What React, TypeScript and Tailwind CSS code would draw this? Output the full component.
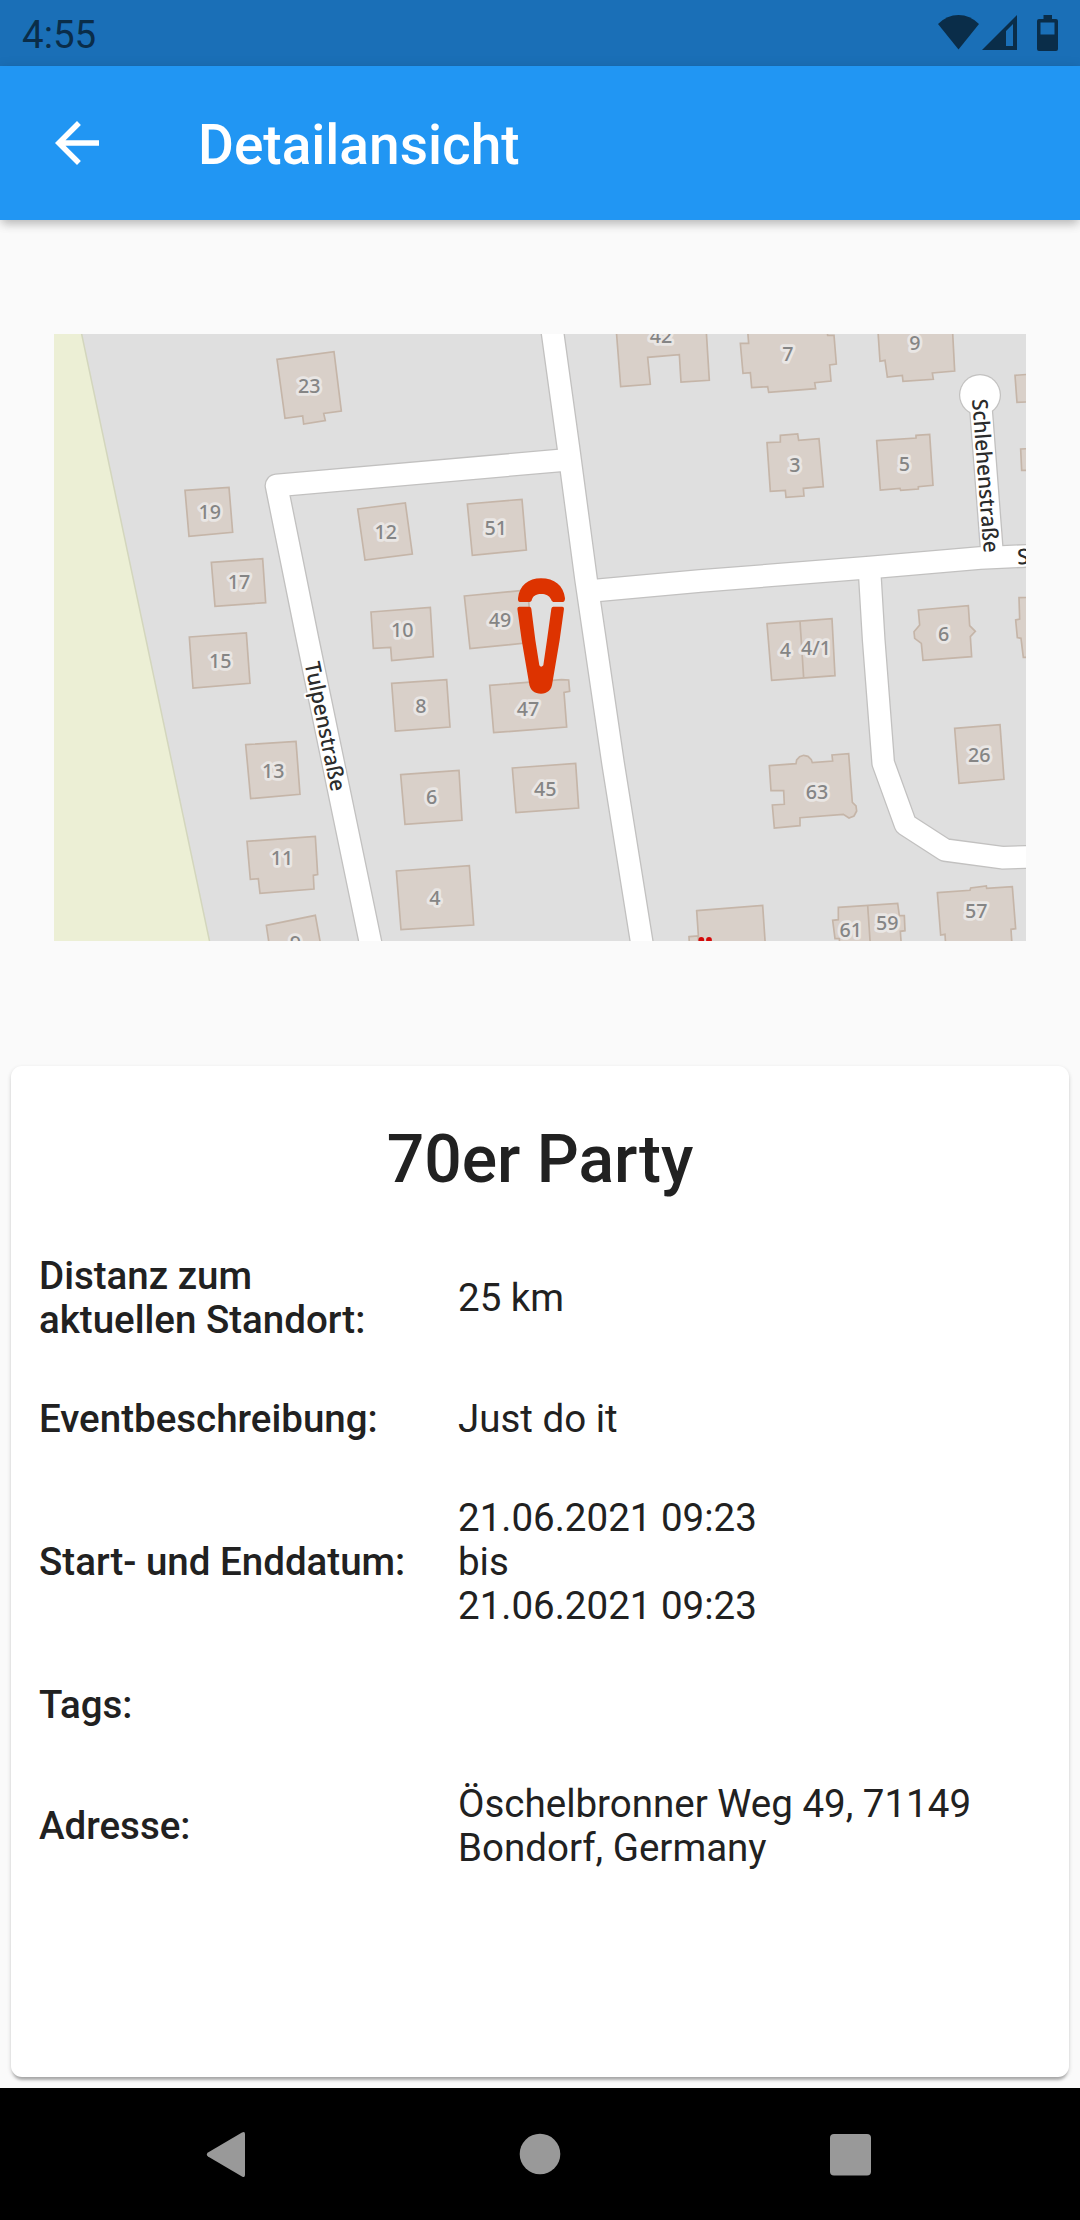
import React from "react";

type Label = [string, number, number];
type Tile = { origin: [number, number]; buildings: string[]; lines?: string[]; labels: Label[] };

// Map sheets: geometry is stored at three units per pixel, relative to the sheet origin.
const tiles: Tile[] = [
  {
    origin: [40, 320],
    buildings: [
      "711,118 882,95 904,273 851,280 856,302 791,312 788,288 735,295",
      "435,511 567,502 578,637 447,649",
      "514,727 668,716 677,848 525,859",
    ],
    labels: [["23", 808, 200], ["19", 509, 577], ["17", 597, 788]],
  },
  {
    origin: [360, 320],
    buildings: [
      "768,20 782,200 871,193 863,112 958,104 963,186 1048,181 1038,20",
      "-7,567 136,549 157,702 15,720",
      "322,552 486,538 499,690 337,706",
      "313,828 503,810 517,967 330,986",
      "33,876 211,862 220,1010 95,1022 92,982 40,985",
    ],
    labels: [["42", 903, 50], ["12", 77, 636], ["51", 407, 625], ["49", 420, 900], ["10", 127, 930]],
  },
  {
    origin: [700, 320],
    buildings: [
      "142,20 146,70 121,70 129,160 151,158 155,203 203,200 206,217 347,206 344,188 393,183 389,135 409,132 402,46 383,46 380,20",
      "533,20 540,124 555,121 562,171 607,166 609,184 700,178 697,159 764,153 757,20",
      "201,368 241,366 241,346 293,342 296,361 357,356 370,500 310,505 312,528 258,532 256,511 211,514",
      "530,362 648,354 648,346 689,343 699,496 655,500 655,507 602,511 600,505 541,510",
      "945,166 1000,162 1000,245 951,247",
      "962,387 1000,385 1000,451 965,451",
      "201,911 396,896 405,1067 215,1081",
      "655,870 805,857 809,917 826,934 811,950 815,1010 669,1021 664,970 644,955 642,935 659,915",
      "957,833 1000,832 1000,1012 970,1012 963,955 952,953 947,900 959,897",
    ],
    lines: ["300,904 311,1073"],
    labels: [["7", 264, 102], ["9", 645, 70], ["3", 285, 437], ["5", 613, 433], ["6", 731, 943]],
  },
  {
    origin: [40, 630],
    buildings: [
      "448,21 619,9 630,160 459,174",
      "617,344 768,334 780,493 632,506",
      "621,634 826,619 833,734 820,736 822,777 660,790 655,746 631,748",
      "679,886 826,856 845,960 690,960",
    ],
    labels: [["15", 541, 95], ["13", 700, 423], ["11", 726, 686], ["9", 766, 940]],
  },
  {
    origin: [360, 630],
    buildings: [
      "95,160 260,149 270,291 106,303",
      "389,166 605,149 626,150 629,184 612,187 620,291 401,308",
      "457,414 647,400 656,534 468,548",
      "122,434 297,421 306,571 135,583",
      "109,723 328,707 341,885 123,899",
    ],
    labels: [["8", 183, 229], ["47", 504, 238], ["6", 215, 503], ["45", 556, 477], ["4", 225, 804]],
  },
  {
    origin: [700, 630],
    buildings: [
      "764,295 900,284 912,448 777,460",
      "208,407 288,401 290,390 299,380 311,376 324,379 334,389 337,398 398,393 396,375 446,371 457,517 468,528 470,543 462,558 447,564 430,553 300,563 300,587 223,594 217,525 253,523 251,482 213,482",
      "415,832 593,820 598,857 613,857 615,902 601,904 605,960 420,960 418,926 405,926 398,871 415,869",
      "712,788 810,781 812,774 859,768 860,775 937,770 947,896 933,898 937,960 738,960 735,913 722,915",
      "-33,920 -5,918 -2,960 -31,960",
      "-10,842 188,826 197,960 -2,960",
    ],
    lines: ["503,826 512,960"],
    labels: [["4", 256, 62], ["4/1", 348, 56], ["63", 351, 486], ["26", 838, 375], ["61", 452, 900], ["59", 562, 881], ["57", 829, 844]],
  },
];

const roads = [
  "M551.9 328L568.5 448L586 579L593.5 630L613 763L641.5 941L643 950",
  "M571 459.5L276.5 485.5L307.7 640L372 950",
  "M590 591L700 581L870 567.5L980 558L1035 555.5",
  "M869.5 570L873.7 640L883.2 763L905.5 824.5L945 850L1002 857.7L1035 856.7",
  "M980 395L981.3 413L991.8 550",
];

const streetNames: { text: string; x: number; y: number; angle: number; length?: number }[] = [
  { text: "Tulpenstraße", x: 304.5, y: 663.5, angle: 78.3, length: 131.5 },
  { text: "Schlehenstraße", x: 972, y: 399.5, angle: 85.6, length: 154 },
  { text: "S", x: 1017.5, y: 564.5, angle: -3 },
];

function StreetMap() {
  return (
    <svg viewBox="54 334 972 607" className="block h-[607px] w-[972px] overflow-hidden bg-[#dfdfdf]">
      <path d="M50 330H80.8L209.5 941V950H50Z" fill="#ecefd5" stroke="#d3d6bd" strokeWidth="1.5" />
      <g fill="none" strokeLinejoin="round">
        <g stroke="#c2c1c0" strokeWidth="24">
          {roads.map((d) => <path key={d} d={d} />)}
        </g>
        <circle cx="980" cy="395" r="21" fill="#c2c1c0" />
        <g stroke="#ffffff" strokeWidth="21.4">
          {roads.map((d) => <path key={d} d={d} />)}
        </g>
        <circle cx="980" cy="395" r="19.8" fill="#ffffff" />
      </g>
      {tiles.map((t) => (
        <g key={t.origin.join()} transform={`translate(${t.origin[0]} ${t.origin[1]}) scale(0.33333)`}>
          <g fill="#d9d0c9" stroke="#c5b5a8" strokeWidth="5">
            {t.buildings.map((p) => <polygon key={p} points={p} />)}
            {t.lines?.map((p) => <polyline key={p} points={p} />)}
          </g>
        </g>
      ))}
      {tiles.map((t) => (
        <g
          key={t.origin.join()}
          transform={`translate(${t.origin[0]} ${t.origin[1]}) scale(0.33333)`}
          className="font-['Noto_Sans'] font-medium"
          fontSize="59"
          textAnchor="middle"
          fill="#858585"
          stroke="#e9e6e4"
          strokeWidth="17"
          strokeLinejoin="round"
          paintOrder="stroke"
        >
          {t.labels.map(([n, x, y]) => <text key={n} x={x} y={y + 20}>{n}</text>)}
        </g>
      ))}
      <g className="font-['Noto_Sans'] font-medium" fontSize="21.5" fill="#2b2b2b" stroke="#ffffff" strokeWidth="4" strokeLinejoin="round" paintOrder="stroke">
        {streetNames.map((s) => (
          <text key={s.text} transform={`translate(${s.x} ${s.y}) rotate(${s.angle})`} textLength={s.length} lengthAdjust="spacingAndGlyphs">{s.text}</text>
        ))}
      </g>
      <g fill="#d40a0a">
        <circle cx="701.3" cy="940" r="2.9" />
        <circle cx="709" cy="940" r="2.9" />
      </g>
      <g transform="translate(360 320) scale(0.33333)" fill="#dd3300">
        <path d="M480 846Q473 846 474 835C478 797 505 775 543 775C583 775 611 797 615 835Q615 846 608 846H580Q575 846 573 838C567 826 558 822 544 822C530 822 520 826 516 838Q515 846 510 846Z" />
        <path d="M478 860H508Q513 860 514 866L526 960L538 1036Q543 1044 550 1036L561 960L574 866Q575 860 580 860H607Q612 860 612 866L599 960L577 1090C575 1110 562 1121 543 1121C524 1121 509 1110 507 1088L485 960L472 866Q472 860 478 860Z" />
      </g>
    </svg>
  );
}

function StatusBar() {
  return (
    <div className="flex h-[66px] shrink-0 items-center justify-between bg-[#1a6fb7] pr-[21px] pl-[22px] text-[#0a2d49]">
      <span className="pt-[5px] text-[38.5px] leading-none">4:55</span>
      <svg viewBox="938 0 121 66" className="h-[66px] w-[121px]" fill="currentColor">
        <path d="M938 24Q947 15 958.5 15T979 24L958.5 49.5Z" />
        <path fillRule="evenodd" d="M982 50L1017 15V50ZM1006 31V46H1013V24Z" />
        <path fillRule="evenodd" d="M1043.500 15H1052V19H1056Q1058 19 1058 21V49Q1058 51 1056 51H1039Q1037 51 1037 49V21Q1037 19 1039 19H1043.500ZM1040.500 22.500V34.500H1054.500V22.500Z" />
      </svg>
    </div>
  );
}

const rows: { label: string[]; value: string[] }[] = [
  { label: ["Distanz zum", "aktuellen Standort:"], value: ["25 km"] },
  { label: ["Eventbeschreibung:"], value: ["Just do it"] },
  { label: ["Start- und Enddatum:"], value: ["21.06.2021 09:23", "bis", "21.06.2021 09:23"] },
  { label: ["Tags:"], value: [] },
  { label: ["Adresse:"], value: ["Öschelbronner Weg 49, 71149", "Bondorf, Germany"] },
];

export default function App() {
  return (
    <div className="flex h-[2220px] w-[1080px] flex-col overflow-hidden bg-[#fafafa] font-['Roboto',sans-serif] text-[#212121]">
      <StatusBar />
      <header className="flex h-[154px] shrink-0 items-center bg-[#2196f3] pl-[44px] text-white shadow-[0_6px_9px_-2px_rgba(0,0,0,0.18),0_2px_12px_rgba(0,0,0,0.13)]">
        <svg viewBox="0 0 24 24" className="size-[66px]" fill="currentColor">
          <path d="M20 11H7.830l5.590-5.590L12 4l-8 8 8 8 1.410-1.410L7.830 13H20v-2z" />
        </svg>
        <h1 className="ml-[88px] pt-[4px] text-[55px] leading-[64px] font-medium">Detailansicht</h1>
      </header>
      <div className="mt-[114px] flex h-[607px] shrink-0 justify-center">
        <StreetMap />
      </div>
      <main className="mx-[11px] mt-[125px] flex h-[1011px] shrink-0 flex-col rounded-[11px] bg-white px-[28px] pt-[54px] shadow-[0_5px_3px_-2px_rgba(0,0,0,0.22),0_2px_4px_rgba(0,0,0,0.18)]">
        <h2 className="text-center text-[66px] leading-[80px] font-medium">70er Party</h2>
        <div className="mt-[54px] flex flex-col gap-[55px] text-[38.5px] leading-[44px]">
          {rows.map((r) => (
            <div key={r.label[0]} className="flex items-center">
              <div className="w-[419px] shrink-0 font-medium">
                {r.label.map((l) => <div key={l}>{l}</div>)}
              </div>
              <div>{r.value.map((l, i) => <div key={i}>{l}</div>)}</div>
            </div>
          ))}
        </div>
      </main>
      <nav className="mt-[11px] h-[132px] shrink-0 bg-black">
        <svg viewBox="0 2088 1080 132" className="h-[132px] w-[1080px]" fill="#999999">
          <path d="M242 2132.500Q245 2131 245 2134V2175Q245 2178 242 2176.500L208 2156.500Q205.500 2154.500 208 2152.500Z" />
          <circle cx="540" cy="2154" r="20.300" />
          <rect x="830" y="2134" width="41" height="41.500" rx="4" />
        </svg>
      </nav>
    </div>
  );
}
